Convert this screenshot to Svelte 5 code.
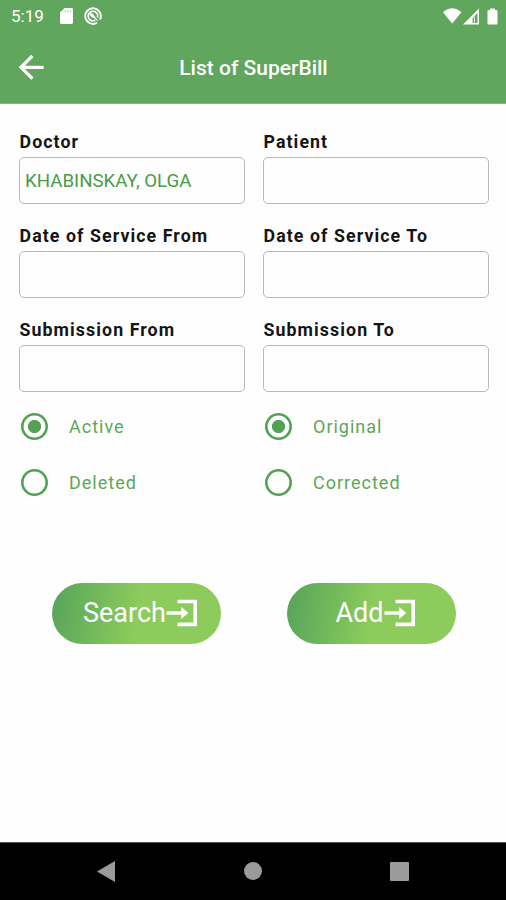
<script>
  let fields = $state([
    { id: "doctor", label: "Doctor", value: "KHABINSKAY, OLGA" },
    { id: "patient", label: "Patient", value: "" },
    { id: "serviceFrom", label: "Date of Service From", value: "" },
    { id: "serviceTo", label: "Date of Service To", value: "" },
    { id: "submissionFrom", label: "Submission From", value: "" },
    { id: "submissionTo", label: "Submission To", value: "" }
  ]);

  let groups = $state([
    { name: "status", options: ["Active", "Deleted"], selected: "Active" },
    { name: "version", options: ["Original", "Corrected"], selected: "Original" }
  ]);

  const actions = ["Search", "Add"];
</script>

<div class="screen">
  <header>
    <div class="statusBar">
      <span class="time">5:19</span>
      <svg class="sd" width="13" height="16" viewBox="0 0 13 16">
        <path d="M4.6 0H11.6Q13 0 13 1.4V14.6Q13 16 11.6 16H1.4Q0 16 0 14.6V4.6Z" fill="#fff" />
        <path d="M5.2 2V4.4M7.8 2V4.4M10.3 2V4.4" stroke="#60a65c" stroke-width="0.9" opacity="0.55" />
      </svg>
      <svg class="ring" width="18" height="18" viewBox="0 0 18 18" fill="none" stroke="#fff">
        <path d="M13 15.8A7.8 7.8 0 1 1 16 12.6" stroke-width="1.9" />
        <path d="M11.4 13.2A4.8 4.8 0 1 1 13.6 10.4" stroke-width="1.6" />
        <path d="M5.2 6.2Q9 5.2 11.6 11.4Q6.6 11.2 5.2 6.2Z" fill="#fff" stroke="none" />
        <path d="M8.5 8.5L13.6 13.6" stroke-width="1.2" />
      </svg>
      <svg class="signals" width="56" height="17" viewBox="0 0 56 17">
        <path d="M0 4.2Q9.2-3.6 18.4 4.2L9.2 15.6Z" fill="#fff" />
        <path d="M36 0.5V16.6H20Z" fill="#fff" />
        <path d="M34.5 5V15.1H29.6V10Z" fill="#60a65c" />
        <path d="M31.4 8.6V15.1" stroke="#fff" stroke-width="0.9" />
        <path d="M47 2V0.4H52V2H53.4Q54.5 2 54.5 3.1V15.5Q54.5 16.6 53.4 16.6H45.6Q44.5 16.6 44.5 15.5V3.1Q44.5 2 45.6 2Z" fill="#fff" />
      </svg>
    </div>
    <div class="titleBar">
      <button class="back" aria-label="Back">
        <svg width="26" height="26" viewBox="0 0 26 26" fill="none" stroke="#fff" stroke-width="3.3">
          <path d="M25.6 13.3H3.4M14.4 1.9L3 13.3L14.4 24.7" />
        </svg>
      </button>
      <h1>List of SuperBill</h1>
    </div>
  </header>

  <main>
    <div class="fields">
      {#each fields as field (field.id)}
        <div class="field">
          <label for={field.id}>{field.label}</label>
          <input id={field.id} type="text" bind:value={field.value} />
        </div>
      {/each}
    </div>

    <div class="groups">
      {#each groups as group (group.name)}
        <div class="group" role="radiogroup" aria-label={group.name}>
          {#each group.options as option}
            <label class="radio">
              <input type="radio" name={group.name} value={option} bind:group={group.selected} />
              <span>{option}</span>
            </label>
          {/each}
        </div>
      {/each}
    </div>

    <div class="actions">
      {#each actions as action}
        <button class="action">
          <span>{action}</span>
          <svg width="32" height="28" viewBox="0 0 32 28">
            <path d="M11.5 2.5H29.2V25.4H11.5" fill="none" stroke="#fff" stroke-width="3.6" />
            <path d="M0.5 14H17" stroke="#fff" stroke-width="3.4" />
            <path d="M15.2 8L22.4 14L15.2 20Z" fill="#fff" />
          </svg>
        </button>
      {/each}
    </div>
  </main>

  <nav>
    <svg width="18" height="21" viewBox="0 0 18 21"><path d="M0 10.5L18 0V21Z" fill="#9b9b9b" /></svg>
    <svg width="18" height="18" viewBox="0 0 18 18"><circle cx="9" cy="9" r="9" fill="#9b9b9b" /></svg>
    <svg width="19" height="19" viewBox="0 0 19 19"><rect width="19" height="19" rx="1" fill="#9b9b9b" /></svg>
  </nav>
</div>

<style>
  :global(body) {
    margin: 0;
  }

  .screen {
    width: 506px;
    height: 900px;
    display: flex;
    flex-direction: column;
    overflow: hidden;
    background: #fefefe;
    font-family: Roboto, "Liberation Sans", sans-serif;
  }

  button {
    border: 0;
    padding: 0;
    font: inherit;
    color: inherit;
    background: none;
    cursor: pointer;
  }

  svg {
    display: block;
    flex: none;
  }

  header {
    height: 104px;
    flex: none;
    box-sizing: border-box;
    color: #fff;
    background: #60a65c;
    border-bottom: 1px solid #7fb67b;
  }

  .statusBar {
    height: 32px;
    display: flex;
    align-items: center;
    padding: 0 7px 0 11px;
  }

  .time {
    width: 49px;
    font-size: 17px;
  }

  .ring {
    margin-left: 11px;
  }

  .signals {
    margin-left: auto;
  }

  .titleBar {
    height: 71px;
    display: grid;
    grid-template-columns: 60px 1fr 60px;
    align-items: center;
  }

  .back {
    margin: 0 0 1px 18px;
    width: 26px;
  }

  h1 {
    margin: 1px 0 0 1px;
    text-align: center;
    font-size: 21px;
    font-weight: 500;
  }

  main {
    flex: 1;
    padding: 27px 17px 0 19px;
  }

  .fields {
    display: grid;
    grid-template-columns: 226px 226px;
    column-gap: 18px;
    row-gap: 20px;
  }

  .field {
    height: 74px;
    display: flex;
    flex-direction: column;
  }

  .field label {
    height: 26px;
    line-height: 22px;
    padding-left: 0.5px;
    font-size: 17.8px;
    font-weight: 700;
    letter-spacing: 1.07px;
    color: #151515;
    white-space: nowrap;
  }

  .field input {
    height: 47px;
    box-sizing: border-box;
    border: 1px solid #b8b8b8;
    border-radius: 5px;
    padding: 0 5px;
    outline: none;
    background: transparent;
    font: 400 18.7px Roboto, "Liberation Sans", sans-serif;
    color: #4a9c48;
  }

  .groups {
    display: grid;
    grid-template-columns: 226px 226px;
    column-gap: 18px;
    margin-top: 5px;
  }

  .radio {
    height: 56px;
    display: flex;
    align-items: center;
    gap: 21px;
    padding-left: 2px;
    font-size: 18px;
    letter-spacing: 1px;
    color: #5da65b;
    cursor: pointer;
  }

  .radio input {
    appearance: none;
    width: 27px;
    height: 27px;
    margin: 0;
    border-radius: 50%;
    box-shadow: inset 0 0 0 2.6px #55a153;
    background: transparent;
  }

  .radio input:checked {
    background: radial-gradient(circle, #55a153 6.2px, transparent 7px);
  }

  .actions {
    display: flex;
    gap: 66px;
    margin-top: 73px;
    padding-left: 33px;
  }

  .action {
    width: 169px;
    height: 61px;
    display: flex;
    align-items: center;
    justify-content: center;
    box-sizing: border-box;
    padding: 0 0 1px 8px;
    border-radius: 31px;
    background: linear-gradient(100deg, #58a55a 2%, #8ccb5c 50%);
    color: #fff;
    font-size: 27px;
  }

  nav {
    height: 58px;
    flex: none;
    display: flex;
    align-items: center;
    justify-content: space-between;
    box-sizing: border-box;
    padding: 0 97px 1px;
    border-top: 1px solid #555;
    background: #000;
  }
</style>
